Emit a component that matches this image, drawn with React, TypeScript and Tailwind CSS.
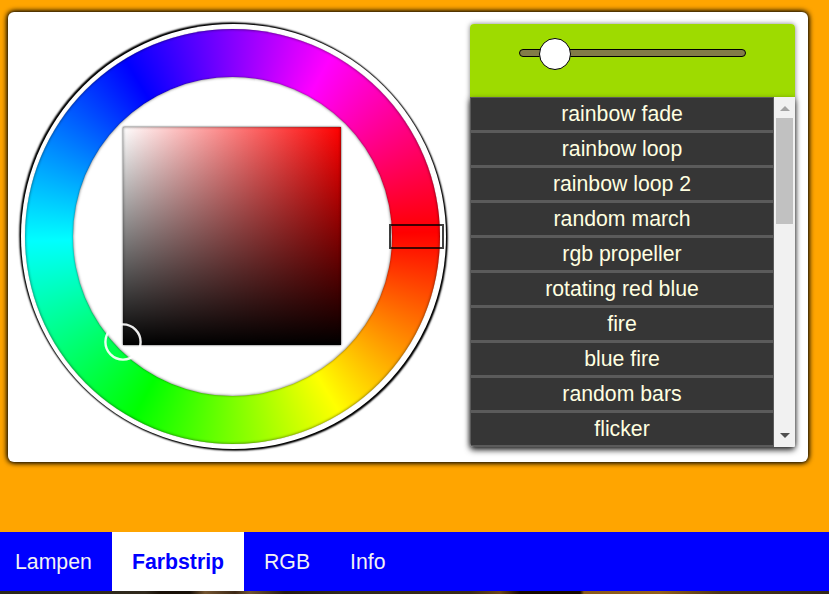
const effects = [
  'rainbow fade', 'rainbow loop', 'rainbow loop 2', 'random march', 'rgb propeller',
  'rotating red blue', 'fire', 'blue fire', 'random bars', 'flicker',
];

function ColorWheel() {
  return (
    <div className="relative ml-[13px] mt-3 h-[425px] w-[425px] shrink-0 rounded-full bg-white shadow-[-1.5px_-1.5px_2px_#000,1.5px_1.5px_2px_#000,-1px_-1px_2px_#000,1px_1px_2px_#000]">
      {/* hue ring */}
      <div className="absolute left-[4px] top-[4.5px] h-[415px] w-[415px] rounded-full bg-[conic-gradient(from_88.7deg,#f00,#ff0,#0f0,#0ff,#00f,#f0f,#f00)] shadow-[inset_0_0_3px_rgba(0,0,0,0.65),0_0_1px_rgba(0,0,0,0.4)]">
        <div className="absolute left-[47.5px] top-12 h-[319px] w-[319px] rounded-full bg-white shadow-[0_0_2px_rgba(0,0,0,0.55),inset_0_0_3px_rgba(0,0,0,0.6)]" />
      </div>
      {/* saturation / value square */}
      <div className="absolute left-[102px] top-[103px] h-[218px] w-[218px] bg-[linear-gradient(to_top,#000,transparent),linear-gradient(to_right,#fff,#f00)] shadow-[inset_0_0_3px_rgba(0,0,0,0.55),0_0_2px_rgba(0,0,0,0.8)]" />
      <div className="absolute left-[368px] top-[200px] h-[25px] w-[55px] border-2 border-black/75" />
      <svg className="absolute left-[82px] top-[298px]" width="40" height="40" viewBox="0 0 40 40">
        <circle cx="20" cy="20" r="17.6" fill="none" stroke="#fff" strokeWidth="2.4" strokeOpacity=".92" />
      </svg>
    </div>
  );
}

function EffectList() {
  return (
    <div className="flex h-[350px] rounded-b-[4px] shadow-[0_3px_6px_rgba(0,0,0,0.8)]">
      <ul className="flex flex-1 flex-col gap-[3px] overflow-hidden rounded-bl-[4px] bg-[#5b5b5b] px-px pt-px">
        {effects.map((name) => (
          <li key={name} className="h-8 shrink-0 bg-[#363636] text-center leading-[32px] text-[#ffffe0]">
            {name}
          </li>
        ))}
      </ul>
      <div className="flex w-[21px] flex-col items-center justify-between rounded-br-[1px] bg-[#f1f1f1]">
        <div className="flex flex-col items-center">
          <svg className="mt-[9px] block" width="10" height="5" viewBox="0 0 10 5"><path d="M5 0L10 5H0Z" fill="#a3a3a3" /></svg>
          <div className="mt-[7px] h-[106px] w-[17px] bg-[#c1c1c1]" />
        </div>
        <svg className="mb-[9px] block" width="10" height="5" viewBox="0 0 10 5"><path d="M0 0H10L5 5Z" fill="#505050" /></svg>
      </div>
    </div>
  );
}

export default function App() {
  return (
    <div className="flex h-[594px] w-[829px] flex-col overflow-hidden bg-[#ffa500] font-['Liberation_Sans',Arial,sans-serif] text-[21.25px]">
      <main className="ml-2 mt-3 flex h-[450px] w-[800px] shrink-0 rounded-[6px] bg-white shadow-[0_0_6px_#000,0_0_5px_#000]">
        <ColorWheel />
        <section className="ml-[24px] mt-3 h-[423px] w-[325px] rounded-[4px] shadow-[0_0_5px_rgba(0,0,0,0.5)]">
          <div className="h-[73px] rounded-t-[4px] bg-[#9edb00] pl-[49px] pt-[25px]">
            <div className="relative h-2 w-[227px] rounded-full border border-black bg-[#827c48]">
              <div className="absolute left-[19px] top-[-12px] h-8 w-8 rounded-full border border-black bg-white" />
            </div>
          </div>
          <EffectList />
        </section>
      </main>
      <nav className="mt-[70px] flex h-[59px] shrink-0 bg-[#0000ff] leading-[60px] text-[#f2f2f2]">
        <a className="w-28 pl-[15px]">Lampen</a>
        <a className="w-[132px] bg-white pl-5 font-bold text-[#0000ff]">Farbstrip</a>
        <a className="w-[86px] pl-5">RGB</a>
        <a className="pl-5">Info</a>
      </nav>
      <div className="h-[3px] shrink-0 bg-[linear-gradient(to_right,#2b281c_0,#30291d_145px,#191007_160px,#171008_190px,#735430_205px,#3c2815_235px,#705334_250px,#261b12_285px,#30291d_340px,#3a2b18_470px,#6d4718_500px,#170900_520px,#170900_580px,#89591b_584px,#93601b_660px,#4c3517_720px,#32271a_829px)]" />
    </div>
  );
}
